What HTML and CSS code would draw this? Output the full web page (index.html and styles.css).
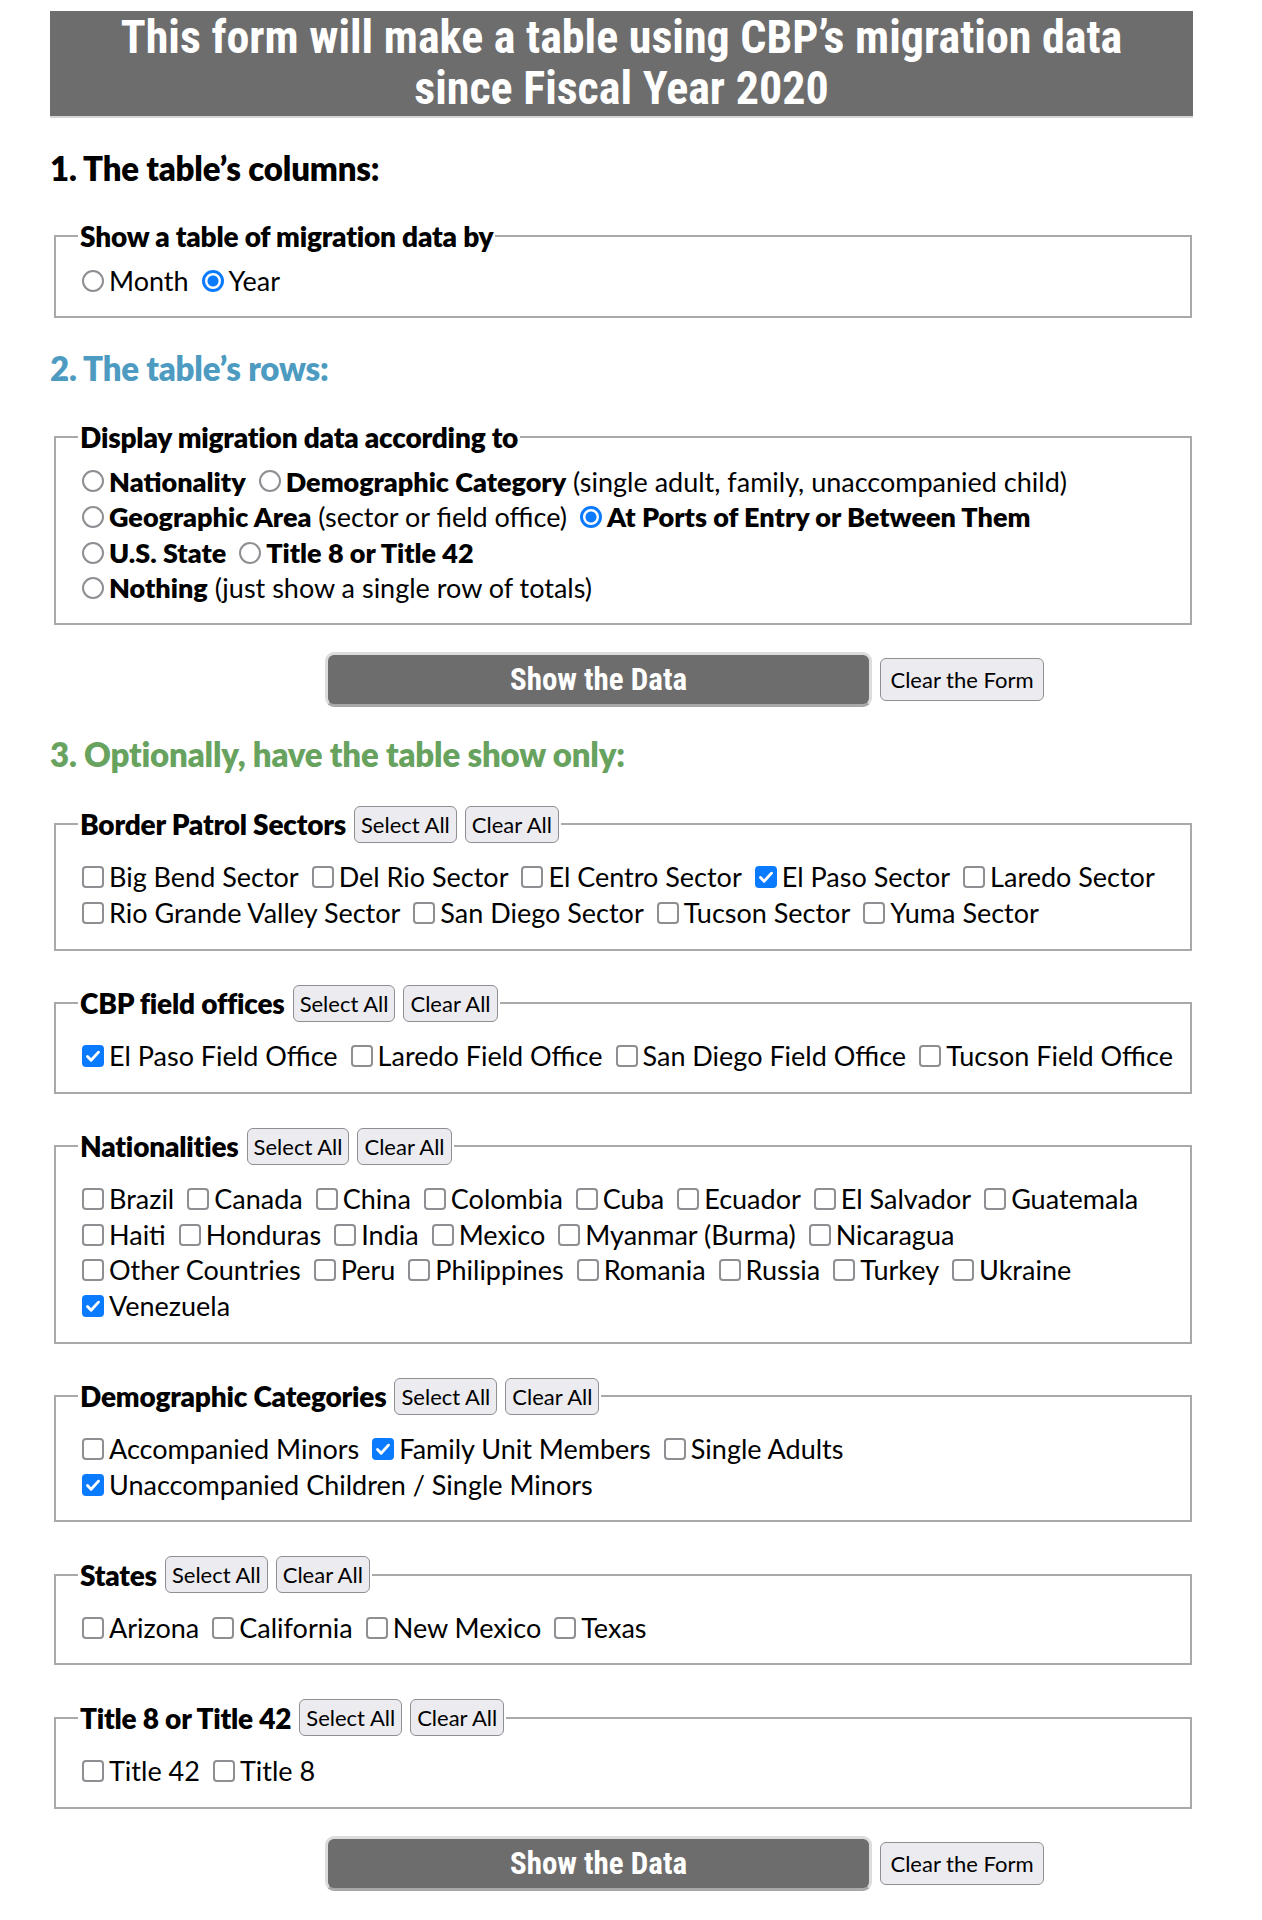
FILE: index.html
```html
<!DOCTYPE html>
<html lang="en">
<head>
<meta charset="utf-8">
<title>CBP migration data table</title>
<link rel="stylesheet" href="styles.css">
</head>
<body>
<main class="page">
  <header class="banner">This form will make a table using CBP’s migration data<br>since Fiscal Year 2020</header>

  <h2 class="step step-1">1. The table’s columns:</h2>
  <fieldset class="box">
    <legend class="legend">Show a table of migration data by</legend>
    <div class="row">
      <label class="opt"><input type="radio" name="period" class="radio">Month</label>
      <label class="opt"><input type="radio" name="period" class="radio" checked>Year</label>
    </div>
  </fieldset>

  <h2 class="step step-2">2. The table’s rows:</h2>
  <fieldset class="box box-last">
    <legend class="legend">Display migration data according to</legend>
    <div class="row">
      <label class="opt"><input type="radio" name="by" class="radio"><b>Nationality</b></label>
      <label class="opt"><input type="radio" name="by" class="radio"><b>Demographic Category</b>&nbsp;(single adult, family, unaccompanied child)</label>
    </div>
    <div class="row">
      <label class="opt"><input type="radio" name="by" class="radio"><b>Geographic Area</b>&nbsp;(sector or field office)</label>
      <label class="opt"><input type="radio" name="by" class="radio" checked><b>At Ports of Entry or Between Them</b></label>
    </div>
    <div class="row">
      <label class="opt"><input type="radio" name="by" class="radio"><b>U.S. State</b></label>
      <label class="opt"><input type="radio" name="by" class="radio"><b>Title 8 or Title 42</b></label>
    </div>
    <div class="row">
      <label class="opt"><input type="radio" name="by" class="radio"><b>Nothing</b>&nbsp;(just show a single row of totals)</label>
    </div>
  </fieldset>

  <div class="actions">
    <button type="button" class="btn-show">Show the Data</button>
    <button type="button" class="btn-clear">Clear the Form</button>
  </div>

  <h2 class="step step-3">3. Optionally, have the table show only:</h2>

  <fieldset class="box box-filter">
    <legend class="legend legend-tools"><span>Border Patrol Sectors</span><button type="button" class="btn-small">Select All</button><button type="button" class="btn-small">Clear All</button></legend>
    <div class="row">
      <label class="opt"><input type="checkbox" class="check">Big Bend Sector</label>
      <label class="opt"><input type="checkbox" class="check">Del Rio Sector</label>
      <label class="opt"><input type="checkbox" class="check">El Centro Sector</label>
      <label class="opt"><input type="checkbox" class="check" checked>El Paso Sector</label>
      <label class="opt"><input type="checkbox" class="check">Laredo Sector</label>
    </div>
    <div class="row">
      <label class="opt"><input type="checkbox" class="check">Rio Grande Valley Sector</label>
      <label class="opt"><input type="checkbox" class="check">San Diego Sector</label>
      <label class="opt"><input type="checkbox" class="check">Tucson Sector</label>
      <label class="opt"><input type="checkbox" class="check">Yuma Sector</label>
    </div>
  </fieldset>

  <fieldset class="box box-filter">
    <legend class="legend legend-tools"><span>CBP field offices</span><button type="button" class="btn-small">Select All</button><button type="button" class="btn-small">Clear All</button></legend>
    <div class="row">
      <label class="opt"><input type="checkbox" class="check" checked>El Paso Field Office</label>
      <label class="opt"><input type="checkbox" class="check">Laredo Field Office</label>
      <label class="opt"><input type="checkbox" class="check">San Diego Field Office</label>
      <label class="opt"><input type="checkbox" class="check">Tucson Field Office</label>
    </div>
  </fieldset>

  <fieldset class="box box-filter">
    <legend class="legend legend-tools"><span>Nationalities</span><button type="button" class="btn-small">Select All</button><button type="button" class="btn-small">Clear All</button></legend>
    <div class="row">
      <label class="opt"><input type="checkbox" class="check">Brazil</label>
      <label class="opt"><input type="checkbox" class="check">Canada</label>
      <label class="opt"><input type="checkbox" class="check">China</label>
      <label class="opt"><input type="checkbox" class="check">Colombia</label>
      <label class="opt"><input type="checkbox" class="check">Cuba</label>
      <label class="opt"><input type="checkbox" class="check">Ecuador</label>
      <label class="opt"><input type="checkbox" class="check">El Salvador</label>
      <label class="opt"><input type="checkbox" class="check">Guatemala</label>
    </div>
    <div class="row">
      <label class="opt"><input type="checkbox" class="check">Haiti</label>
      <label class="opt"><input type="checkbox" class="check">Honduras</label>
      <label class="opt"><input type="checkbox" class="check">India</label>
      <label class="opt"><input type="checkbox" class="check">Mexico</label>
      <label class="opt"><input type="checkbox" class="check">Myanmar (Burma)</label>
      <label class="opt"><input type="checkbox" class="check">Nicaragua</label>
    </div>
    <div class="row">
      <label class="opt"><input type="checkbox" class="check">Other Countries</label>
      <label class="opt"><input type="checkbox" class="check">Peru</label>
      <label class="opt"><input type="checkbox" class="check">Philippines</label>
      <label class="opt"><input type="checkbox" class="check">Romania</label>
      <label class="opt"><input type="checkbox" class="check">Russia</label>
      <label class="opt"><input type="checkbox" class="check">Turkey</label>
      <label class="opt"><input type="checkbox" class="check">Ukraine</label>
    </div>
    <div class="row">
      <label class="opt"><input type="checkbox" class="check" checked>Venezuela</label>
    </div>
  </fieldset>

  <fieldset class="box box-filter">
    <legend class="legend legend-tools"><span>Demographic Categories</span><button type="button" class="btn-small">Select All</button><button type="button" class="btn-small">Clear All</button></legend>
    <div class="row">
      <label class="opt"><input type="checkbox" class="check">Accompanied Minors</label>
      <label class="opt"><input type="checkbox" class="check" checked>Family Unit Members</label>
      <label class="opt"><input type="checkbox" class="check">Single Adults</label>
    </div>
    <div class="row">
      <label class="opt"><input type="checkbox" class="check" checked>Unaccompanied Children / Single Minors</label>
    </div>
  </fieldset>

  <fieldset class="box box-filter">
    <legend class="legend legend-tools"><span>States</span><button type="button" class="btn-small">Select All</button><button type="button" class="btn-small">Clear All</button></legend>
    <div class="row">
      <label class="opt"><input type="checkbox" class="check">Arizona</label>
      <label class="opt"><input type="checkbox" class="check">California</label>
      <label class="opt"><input type="checkbox" class="check">New Mexico</label>
      <label class="opt"><input type="checkbox" class="check">Texas</label>
    </div>
  </fieldset>

  <fieldset class="box box-filter box-last">
    <legend class="legend legend-tools"><span>Title 8 or Title 42</span><button type="button" class="btn-small">Select All</button><button type="button" class="btn-small">Clear All</button></legend>
    <div class="row">
      <label class="opt"><input type="checkbox" class="check">Title 42</label>
      <label class="opt"><input type="checkbox" class="check">Title 8</label>
    </div>
  </fieldset>

  <div class="actions actions-end">
    <button type="button" class="btn-show">Show the Data</button>
    <button type="button" class="btn-clear">Clear the Form</button>
  </div>
</main>
</body>
</html>
```
FILE: styles.css
```css
* { box-sizing: border-box; }

html, body {
  margin: 0;
  padding: 0;
  background: #ffffff;
}

body {
  font-family: Lato, "Noto Sans", "Open Sans", sans-serif;
  color: #000;
  font-size: 27px;
}

.page {
  width: 1143px;
  margin-left: 50px;
  padding-top: 11px;
}

.banner {
  background: #6d6d6d;
  color: #fff;
  text-align: center;
  font-family: "Roboto Condensed", "Liberation Sans Narrow", Lato, sans-serif;
  font-weight: 700;
  font-size: 46px;
  line-height: 51px;
  height: 107px;
  padding-top: 1px;
  border-bottom: 2px solid #d6d6d6;
}

.step {
  margin: 31px 0 35px 0;
  font-size: 33px;
  line-height: 34px;
  font-weight: 800;
  letter-spacing: -0.2px;
}

.step-1 { color: #000; margin-top: 33px; }
.step-2 { color: #4d9bc1; margin-bottom: 36px; }
.step-3 { color: #67a35e; margin-top: 28px; margin-bottom: 35px; }

.box {
  margin: 0 0 33px 4px;
  width: 1138px;
  border: 2px solid #a9a9a9;
  padding: 11px 12px 17px 26px;
  min-width: 0;
}

.box-filter {
  padding-top: 16.5px;
  padding-bottom: 18px;
  margin-bottom: 34px;
}

.box-last { margin-bottom: 27px; }

.legend {
  padding: 0 2px;
  margin-left: -4px;
  font-weight: 800;
  font-size: 28px;
  line-height: 32px;
  letter-spacing: -0.2px;
}

.legend-tools {
  display: flex;
  align-items: center;
  gap: 8px;
}

.row {
  display: flex;
  flex-wrap: nowrap;
  gap: 0 13px;
  height: 35.6px;
  align-items: center;
  white-space: nowrap;
}

.opt {
  display: inline-flex;
  align-items: center;
  line-height: 35.6px;
}

.opt b { font-weight: 800; }

.radio, .check {
  -webkit-appearance: none;
  appearance: none;
  margin: 0 5px 0 0;
  width: 22px;
  height: 22px;
  flex: none;
  background: #fff;
}

.radio {
  border: 2px solid #8e8e93;
  border-radius: 50%;
}

.radio:checked {
  border: 3px solid #0a7aff;
  background: radial-gradient(circle, #0a7aff 0 5px, #fff 6px);
}

.check {
  border: 2px solid #8e8e93;
  border-radius: 4px;
}

.check:checked {
  border: none;
  background-color: #0a7aff;
  background-image: url("data:image/svg+xml,%3Csvg xmlns='http://www.w3.org/2000/svg' viewBox='0 0 20 20'%3E%3Cpath d='M5 10.5l3.3 3.3L15 6.5' fill='none' stroke='white' stroke-width='2.6' stroke-linecap='round' stroke-linejoin='round'/%3E%3C/svg%3E");
}

.actions {
  display: flex;
  align-items: center;
  gap: 8px;
  padding-left: 275px;
  margin: 0 0 30px 0;
}

.actions-end { margin-bottom: 30px; }

.btn-show {
  width: 547px;
  height: 55px;
  background: #6d6d6d;
  color: #fff;
  border: 3px solid #dcdcdc;
  border-bottom-color: #a8a8a8;
  border-radius: 9px;
  font-family: "Roboto Condensed", "Liberation Sans Narrow", Lato, sans-serif;
  font-weight: 700;
  font-size: 31px;
  padding: 0;
}

.btn-clear, .btn-small {
  background: #ebebf0;
  border: 1px solid #8e8e93;
  border-radius: 6px;
  color: #000;
  font-family: Lato, "Noto Sans", sans-serif;
  font-size: 22px;
  padding: 0 6px;
}

.btn-clear {
  height: 43px;
  width: 164px;
}

.btn-small {
  height: 37px;
  font-weight: 400;
}
```
